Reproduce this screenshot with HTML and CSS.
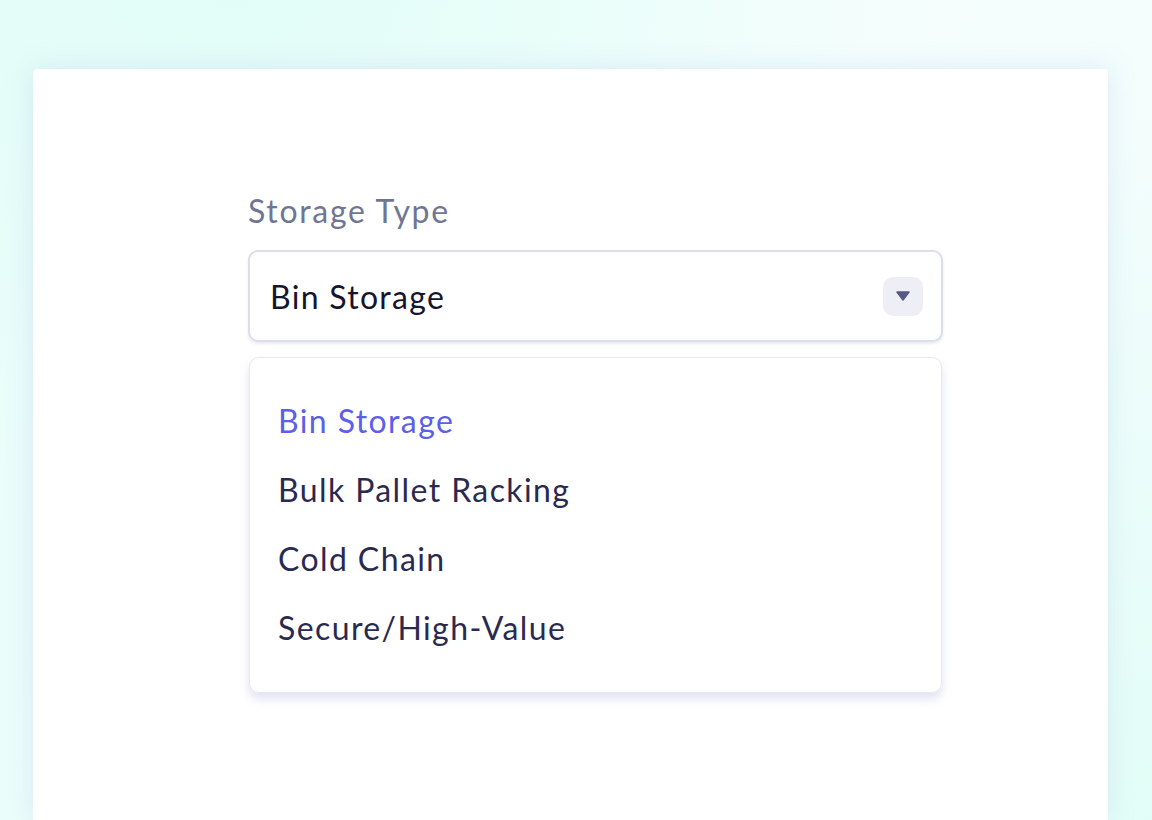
FILE: index.html
```html
<!DOCTYPE html>
<html>
<head>
<meta charset="utf-8">
<link rel="stylesheet" href="styles.css">
</head>
<body>
<main class="card">
  <div class="field">
    <label class="label">Storage Type</label>
    <div class="select">
      <span class="select-value">Bin Storage</span>
      <span class="chev">
        <svg width="16" height="12" viewBox="0 0 16 12"><path d="M2 2h12L8 10z" fill="#525a82" stroke="#525a82" stroke-width="1.5" stroke-linejoin="round"/></svg>
      </span>
    </div>
    <ul class="menu">
      <li class="opt active">Bin Storage</li>
      <li class="opt">Bulk Pallet Racking</li>
      <li class="opt">Cold Chain</li>
      <li class="opt">Secure/High-Value</li>
    </ul>
  </div>
</main>
</body>
</html>
```

FILE: styles.css
```css
html, body {
  margin: 0;
  height: 100%;
}
body {
  background:
    radial-gradient(ellipse 500px 700px at 100% 100%, rgba(226, 253, 247, 1) 0%, rgba(226, 253, 247, 0) 100%),
    radial-gradient(ellipse 700px 400px at 20% 0%, rgba(226, 253, 247, 1) 0%, rgba(226, 253, 247, 0) 100%),
    linear-gradient(100deg, #e8fdf9 0%, #f5fefd 60%, #f2fdfc 100%);
  font-family: Lato, "Open Sans", sans-serif;
  overflow: hidden;
  padding: 69px 44px 0 33px;
  box-sizing: border-box;
  display: flex;
  flex-direction: column;
}
.card {
  flex: 1;
  background: #fff;
  border-radius: 4px 4px 0 0;
  box-shadow: 0 0 24px rgba(180, 195, 240, 0.35);
  padding: 124px 0 0 215px;
  box-sizing: border-box;
}
.field {
  width: 695px;
}
.label {
  display: block;
  font-size: 32px;
  letter-spacing: 1.7px;
  color: #6f7694;
  line-height: 36px;
  margin-bottom: 21px;
}
.select {
  height: 92px;
  border: 2px solid #dcdeea;
  border-radius: 10px;
  box-sizing: border-box;
  display: flex;
  align-items: center;
  justify-content: space-between;
  padding: 0 18px 0 20px;
  box-shadow: 0 2px 3px rgba(200, 205, 225, 0.4);
}
.select-value {
  font-size: 32px;
  letter-spacing: 1.3px;
  color: #15152e;
}
.chev {
  width: 40px;
  height: 39px;
  border-radius: 10px;
  background: #eeeff6;
  display: flex;
  align-items: center;
  justify-content: center;
}
.menu {
  list-style: none;
  margin: 15px 1px 0;
  padding: 28px 0 30px 28px;
  border: 1px solid #e6e8f0;
  border-radius: 10px;
  box-shadow: 0 6px 10px rgba(170, 175, 215, 0.35);
}
.opt {
  font-size: 32px;
  letter-spacing: 1.4px;
  line-height: 69px;
  color: #2a2a50;
}
.opt.active {
  color: #5c5fe8;
}
```
